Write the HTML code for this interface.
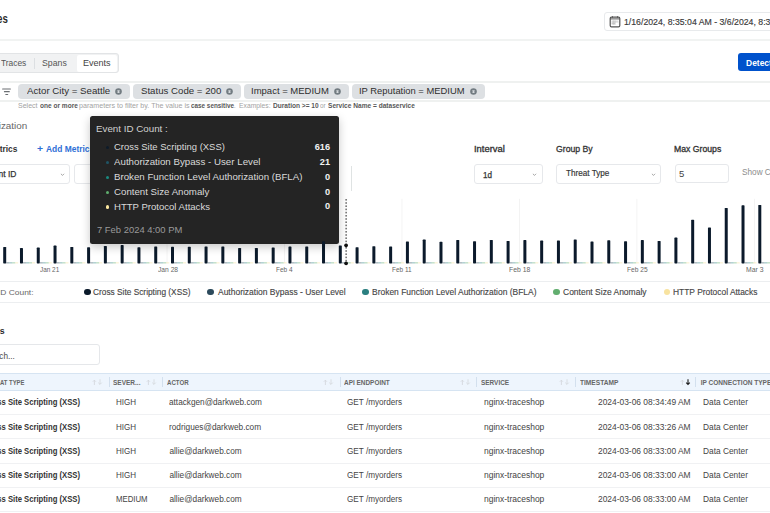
<!DOCTYPE html><html><head><meta charset="utf-8"><style>
html,body{margin:0;padding:0;background:#fff;width:770px;height:513px;overflow:hidden;position:relative}
body{font-family:"Liberation Sans",sans-serif}
.t{position:absolute;white-space:nowrap;transform-origin:0 0}
.b{position:absolute;box-sizing:border-box}
</style></head><body>
<div class="t" style="left:-2.95px;top:12.86px;font-size:12.69px;line-height:12.69px;font-weight:700;color:#2b2b2b;transform:scaleX(0.7667);">es</div>
<div class="b" style="left:0;top:39px;width:770px;height:2px;background:#f1f3f2"></div>
<div class="b" style="left:604px;top:12px;width:180px;height:18.8px;border:1px solid #e8eaec;border-radius:3px"></div>
<svg class="b" style="left:609px;top:16px" width="12" height="11.5" viewBox="0 0 12 11.5">
<rect x="1.2" y="1.2" width="9.6" height="9.6" rx="1.3" fill="none" stroke="#555" stroke-width="1.2"/>
<line x1="1.2" y1="2.9" x2="10.8" y2="2.9" stroke="#555" stroke-width="1"/>
<line x1="3.5" y1="0.2" x2="3.5" y2="1.8" stroke="#555" stroke-width="0.9"/><line x1="8.5" y1="0.2" x2="8.5" y2="1.8" stroke="#555" stroke-width="0.9"/>
<rect x="2.6" y="4.3" width="6.8" height="4.6" fill="#e9e9e9"/>
<path d="M2.6 6H9.4M2.6 7.5H6.5M4.3 4.3V8.9M6 4.3V8.9" stroke="#b5b5b5" stroke-width="0.55"/>
<rect x="6.6" y="6.6" width="2.8" height="2.3" fill="#fff"/>
</svg>
<div class="t" style="left:624.41px;top:16.60px;font-size:9.45px;line-height:9.45px;font-weight:400;color:#3a3a3a;transform:scaleX(0.9241);-webkit-text-stroke:0.15px #3a3a3a;">1/16/2024, 8:35:04 AM - 3/6/2024, 8:35:04 AM</div>
<div class="b" style="left:-6px;top:53px;width:124.7px;height:20px;background:#f1f2f3;border:1px solid #e2e4e6;border-radius:3px"></div>
<div class="b" style="left:76.9px;top:54.5px;width:40.5px;height:17px;background:#fff;border-radius:2px"></div>
<div class="b" style="left:34.2px;top:57.7px;width:0.8px;height:11px;background:#dcdfe2"></div>
<div class="t" style="left:0.57px;top:59.27px;font-size:9.01px;line-height:9.01px;font-weight:400;color:#555;transform:scaleX(0.9308);">Traces</div>
<div class="t" style="left:42.22px;top:59.27px;font-size:9.01px;line-height:9.01px;font-weight:400;color:#555;transform:scaleX(0.9697);">Spans</div>
<div class="t" style="left:83.25px;top:59.27px;font-size:9.01px;line-height:9.01px;font-weight:400;color:#444;transform:scaleX(1.0038);">Events</div>
<div class="b" style="left:737.8px;top:53px;width:60px;height:17.6px;background:#0052cc;border-radius:3px"></div>
<div class="t" style="left:746.10px;top:59.16px;font-size:8.43px;line-height:8.43px;font-weight:700;color:#fff;transform:scaleX(1.0000);">Detect</div>
<div class="b" style="left:0;top:81px;width:770px;height:1.7px;background:#eff1f0"></div>
<div class="b" style="left:0;top:100.2px;width:770px;height:1.7px;background:#eff1f0"></div>
<svg class="b" style="left:2px;top:88px" width="10" height="8" viewBox="0 0 10 8">
<line x1="0.6" y1="1" x2="8.4" y2="1" stroke="#6a6e72" stroke-width="1.1" stroke-linecap="round"/>
<line x1="2.4" y1="3.65" x2="7.3" y2="3.65" stroke="#6a6e72" stroke-width="1.1" stroke-linecap="round"/>
<line x1="3.8" y1="6.5" x2="5.7" y2="6.5" stroke="#6a6e72" stroke-width="1.1" stroke-linecap="round"/></svg>
<div class="b" style="left:18px;top:84px;width:111.6px;height:15.2px;background:#dde0e3;border-radius:4px"></div>
<div class="t" style="left:26.50px;top:85.88px;font-size:9.59px;line-height:9.59px;font-weight:400;color:#2e2e2e;transform:scaleX(1.0122);">Actor City = Seattle</div>
<svg class="b" style="left:115.1px;top:88.4px" width="7" height="7" viewBox="0 0 7 7"><circle cx="3.5" cy="3.5" r="3.3" fill="#737c82"/><path d="M2.5 2.5L4.5 4.5M4.5 2.5L2.5 4.5" stroke="#d5d9dc" stroke-width="1.1"/></svg>
<div class="b" style="left:132.9px;top:84px;width:108.3px;height:15.2px;background:#dde0e3;border-radius:4px"></div>
<div class="t" style="left:140.50px;top:85.88px;font-size:9.59px;line-height:9.59px;font-weight:400;color:#2e2e2e;transform:scaleX(1.0083);">Status Code = 200</div>
<svg class="b" style="left:226.1px;top:88.4px" width="7" height="7" viewBox="0 0 7 7"><circle cx="3.5" cy="3.5" r="3.3" fill="#737c82"/><path d="M2.5 2.5L4.5 4.5M4.5 2.5L2.5 4.5" stroke="#d5d9dc" stroke-width="1.1"/></svg>
<div class="b" style="left:244.2px;top:84px;width:104.4px;height:15.2px;background:#dde0e3;border-radius:4px"></div>
<div class="t" style="left:251.06px;top:85.88px;font-size:9.59px;line-height:9.59px;font-weight:400;color:#2e2e2e;transform:scaleX(0.9922);">Impact = MEDIUM</div>
<svg class="b" style="left:333.7px;top:88.4px" width="7" height="7" viewBox="0 0 7 7"><circle cx="3.5" cy="3.5" r="3.3" fill="#737c82"/><path d="M2.5 2.5L4.5 4.5M4.5 2.5L2.5 4.5" stroke="#d5d9dc" stroke-width="1.1"/></svg>
<div class="b" style="left:351.5px;top:84px;width:133.2px;height:15.2px;background:#dde0e3;border-radius:4px"></div>
<div class="t" style="left:358.96px;top:85.88px;font-size:9.59px;line-height:9.59px;font-weight:400;color:#2e2e2e;transform:scaleX(0.9807);">IP Reputation = MEDIUM</div>
<svg class="b" style="left:470.0px;top:88.4px" width="7" height="7" viewBox="0 0 7 7"><circle cx="3.5" cy="3.5" r="3.3" fill="#737c82"/><path d="M2.5 2.5L4.5 4.5M4.5 2.5L2.5 4.5" stroke="#d5d9dc" stroke-width="1.1"/></svg>
<div class="t" style="left:18.39px;top:103.42px;font-size:6.83px;line-height:6.83px;font-weight:400;color:#a3a3a3;transform:scaleX(1.0270);">Select</div>
<div class="t" style="left:39.66px;top:103.42px;font-size:6.83px;line-height:6.83px;font-weight:700;color:#585858;transform:scaleX(0.9590);">one or more</div>
<div class="t" style="left:79.18px;top:103.42px;font-size:6.83px;line-height:6.83px;font-weight:400;color:#a3a3a3;transform:scaleX(1.0432);">parameters to filter by. The value is</div>
<div class="t" style="left:190.97px;top:103.42px;font-size:6.83px;line-height:6.83px;font-weight:700;color:#585858;transform:scaleX(0.9290);">case sensitive</div>
<div class="t" style="left:233.70px;top:103.42px;font-size:6.83px;line-height:6.83px;font-weight:400;color:#a3a3a3;transform:scaleX(1.0000);">.</div>
<div class="t" style="left:239.31px;top:103.42px;font-size:6.83px;line-height:6.83px;font-weight:400;color:#a3a3a3;transform:scaleX(0.9886);">Examples:</div>
<div class="t" style="left:272.52px;top:103.42px;font-size:6.83px;line-height:6.83px;font-weight:700;color:#585858;transform:scaleX(0.9626);">Duration &gt;= 10</div>
<div class="t" style="left:319.77px;top:103.42px;font-size:6.83px;line-height:6.83px;font-weight:400;color:#a3a3a3;transform:scaleX(0.9217);">or</div>
<div class="t" style="left:328.16px;top:103.42px;font-size:6.83px;line-height:6.83px;font-weight:700;color:#585858;transform:scaleX(0.9638);">Service Name = dataservice</div>
<div class="t" style="left:-28.32px;top:122.16px;font-size:8.90px;line-height:8.90px;font-weight:400;color:#666;transform:scaleX(1.1130);">Visualization</div>
<div class="t" style="left:-11.87px;top:145.81px;font-size:8.14px;line-height:8.14px;font-weight:700;color:#333;transform:scaleX(1.0327);">Metrics</div>
<div class="t" style="left:36.61px;top:145.22px;font-size:8.83px;line-height:8.83px;font-weight:700;color:#2f6fd6;transform:scaleX(1.1778);">+</div>
<div class="t" style="left:45.74px;top:145.81px;font-size:8.14px;line-height:8.14px;font-weight:700;color:#2f6fd6;transform:scaleX(1.0361);">Add Metric</div>
<div class="b" style="left:-10px;top:164.3px;width:80px;height:19.4px;border:1px solid #e6e8eb;border-radius:3px"></div>
<div class="t" style="left:-16.27px;top:170.44px;font-size:8.58px;line-height:8.58px;font-weight:400;color:#333;transform:scaleX(0.9867);-webkit-text-stroke:0.25px #333;">Event ID</div>
<svg class="b" style="left:60px;top:172.5px" width="5" height="3.5" viewBox="0 0 5 3.5"><path d="M0.9 0.8L2.5 2.4L4.1 0.8" fill="none" stroke="#8a8a8a" stroke-width="0.75"/></svg>
<div class="b" style="left:74.3px;top:164.3px;width:100px;height:19.4px;border:1px solid #e6e8eb;border-radius:3px"></div>
<div class="b" style="left:351px;top:165.6px;width:1px;height:25px;background:#dfe3e3"></div>
<div class="t" style="left:474.23px;top:145.51px;font-size:8.14px;line-height:8.14px;font-weight:400;color:#333;transform:scaleX(1.1569);-webkit-text-stroke:0.3px #333;">Interval</div>
<div class="b" style="left:474.4px;top:164.2px;width:68.3px;height:19.8px;border:1px solid #e6e8eb;border-radius:3px"></div>
<div class="t" style="left:483.42px;top:170.62px;font-size:8.37px;line-height:8.37px;font-weight:400;color:#333;transform:scaleX(0.9697);-webkit-text-stroke:0.25px #333;">1d</div>
<svg class="b" style="left:532.3px;top:172.6px" width="5" height="3.5" viewBox="0 0 5 3.5"><path d="M0.9 0.8L2.5 2.4L4.1 0.8" fill="none" stroke="#8a8a8a" stroke-width="0.75"/></svg>
<div class="t" style="left:555.72px;top:145.27px;font-size:9.01px;line-height:9.01px;font-weight:400;color:#333;transform:scaleX(0.9653);-webkit-text-stroke:0.3px #333;">Group By</div>
<div class="b" style="left:556.2px;top:164.3px;width:104.8px;height:19.4px;border:1px solid #e6e8eb;border-radius:3px"></div>
<div class="t" style="left:565.65px;top:170.31px;font-size:8.14px;line-height:8.14px;font-weight:400;color:#333;transform:scaleX(1.0035);-webkit-text-stroke:0.15px #333;">Threat Type</div>
<svg class="b" style="left:650.7px;top:172.6px" width="5" height="3.5" viewBox="0 0 5 3.5"><path d="M0.9 0.8L2.5 2.4L4.1 0.8" fill="none" stroke="#8a8a8a" stroke-width="0.75"/></svg>
<div class="t" style="left:674.21px;top:145.79px;font-size:8.28px;line-height:8.28px;font-weight:400;color:#333;transform:scaleX(1.0500);-webkit-text-stroke:0.3px #333;">Max Groups</div>
<div class="b" style="left:674.8px;top:164px;width:54.6px;height:19px;border:1px solid #e6e8eb;border-radius:3px"></div>
<div class="t" style="left:679.36px;top:170.19px;font-size:8.87px;line-height:8.87px;font-weight:400;color:#444;transform:scaleX(1.0750);">5</div>
<div class="t" style="left:742.49px;top:168.91px;font-size:8.14px;line-height:8.14px;font-weight:400;color:#8c8c8c;transform:scaleX(1.0127);">Show Columns</div>
<svg class="b" style="left:0;top:0" width="770" height="300" viewBox="0 0 770 300"><rect x="166.66" y="198.8" width="0.8" height="64.5" fill="#f1f1f1"/><rect x="284.12" y="198.8" width="0.8" height="64.5" fill="#f1f1f1"/><rect x="401.58" y="198.8" width="0.8" height="64.5" fill="#f1f1f1"/><rect x="519.04" y="198.8" width="0.8" height="64.5" fill="#f1f1f1"/><rect x="636.50" y="198.8" width="0.8" height="64.5" fill="#f1f1f1"/><rect x="753.96" y="198.8" width="0.8" height="64.5" fill="#f1f1f1"/><rect x="3.20" y="247" width="3" height="16.4" rx="0.6" fill="#0b1a2b"/><rect x="6.20" y="262.3" width="3" height="1.1" fill="#2c4a5c" opacity="0.5"/><rect x="9.20" y="262.3" width="3" height="1.1" fill="#2b7f80" opacity="0.5"/><rect x="12.20" y="262.3" width="3" height="1.1" fill="#62ae6f" opacity="0.5"/><rect x="15.20" y="262.3" width="3" height="1.1" fill="#f8e3a0" opacity="0.5"/><rect x="19.98" y="248" width="3" height="15.4" rx="0.6" fill="#0b1a2b"/><rect x="22.98" y="262.3" width="3" height="1.1" fill="#2c4a5c" opacity="0.5"/><rect x="25.98" y="262.3" width="3" height="1.1" fill="#2b7f80" opacity="0.5"/><rect x="28.98" y="262.3" width="3" height="1.1" fill="#62ae6f" opacity="0.5"/><rect x="31.98" y="262.3" width="3" height="1.1" fill="#f8e3a0" opacity="0.5"/><rect x="36.76" y="247.6" width="3" height="15.8" rx="0.6" fill="#0b1a2b"/><rect x="39.76" y="262.3" width="3" height="1.1" fill="#2c4a5c" opacity="0.5"/><rect x="42.76" y="262.3" width="3" height="1.1" fill="#2b7f80" opacity="0.5"/><rect x="45.76" y="262.3" width="3" height="1.1" fill="#62ae6f" opacity="0.5"/><rect x="48.76" y="262.3" width="3" height="1.1" fill="#f8e3a0" opacity="0.5"/><rect x="53.54" y="245.6" width="3" height="17.8" rx="0.6" fill="#0b1a2b"/><rect x="56.54" y="262.3" width="3" height="1.1" fill="#2c4a5c" opacity="0.5"/><rect x="59.54" y="262.3" width="3" height="1.1" fill="#2b7f80" opacity="0.5"/><rect x="62.54" y="262.3" width="3" height="1.1" fill="#62ae6f" opacity="0.5"/><rect x="65.54" y="262.3" width="3" height="1.1" fill="#f8e3a0" opacity="0.5"/><rect x="70.32" y="247" width="3" height="16.4" rx="0.6" fill="#0b1a2b"/><rect x="73.32" y="262.3" width="3" height="1.1" fill="#2c4a5c" opacity="0.5"/><rect x="76.32" y="262.3" width="3" height="1.1" fill="#2b7f80" opacity="0.5"/><rect x="79.32" y="262.3" width="3" height="1.1" fill="#62ae6f" opacity="0.5"/><rect x="82.32" y="262.3" width="3" height="1.1" fill="#f8e3a0" opacity="0.5"/><rect x="87.10" y="247.3" width="3" height="16.1" rx="0.6" fill="#0b1a2b"/><rect x="90.10" y="262.3" width="3" height="1.1" fill="#2c4a5c" opacity="0.5"/><rect x="93.10" y="262.3" width="3" height="1.1" fill="#2b7f80" opacity="0.5"/><rect x="96.10" y="262.3" width="3" height="1.1" fill="#62ae6f" opacity="0.5"/><rect x="99.10" y="262.3" width="3" height="1.1" fill="#f8e3a0" opacity="0.5"/><rect x="103.88" y="246" width="3" height="17.4" rx="0.6" fill="#0b1a2b"/><rect x="106.88" y="262.3" width="3" height="1.1" fill="#2c4a5c" opacity="0.5"/><rect x="109.88" y="262.3" width="3" height="1.1" fill="#2b7f80" opacity="0.5"/><rect x="112.88" y="262.3" width="3" height="1.1" fill="#62ae6f" opacity="0.5"/><rect x="115.88" y="262.3" width="3" height="1.1" fill="#f8e3a0" opacity="0.5"/><rect x="120.66" y="245.1" width="3" height="18.3" rx="0.6" fill="#0b1a2b"/><rect x="123.66" y="262.3" width="3" height="1.1" fill="#2c4a5c" opacity="0.5"/><rect x="126.66" y="262.3" width="3" height="1.1" fill="#2b7f80" opacity="0.5"/><rect x="129.66" y="262.3" width="3" height="1.1" fill="#62ae6f" opacity="0.5"/><rect x="132.66" y="262.3" width="3" height="1.1" fill="#f8e3a0" opacity="0.5"/><rect x="137.44" y="247.3" width="3" height="16.1" rx="0.6" fill="#0b1a2b"/><rect x="140.44" y="262.3" width="3" height="1.1" fill="#2c4a5c" opacity="0.5"/><rect x="143.44" y="262.3" width="3" height="1.1" fill="#2b7f80" opacity="0.5"/><rect x="146.44" y="262.3" width="3" height="1.1" fill="#62ae6f" opacity="0.5"/><rect x="149.44" y="262.3" width="3" height="1.1" fill="#f8e3a0" opacity="0.5"/><rect x="154.22" y="246.4" width="3" height="17.0" rx="0.6" fill="#0b1a2b"/><rect x="157.22" y="262.3" width="3" height="1.1" fill="#2c4a5c" opacity="0.5"/><rect x="160.22" y="262.3" width="3" height="1.1" fill="#2b7f80" opacity="0.5"/><rect x="163.22" y="262.3" width="3" height="1.1" fill="#62ae6f" opacity="0.5"/><rect x="166.22" y="262.3" width="3" height="1.1" fill="#f8e3a0" opacity="0.5"/><rect x="171.00" y="246.7" width="3" height="16.7" rx="0.6" fill="#0b1a2b"/><rect x="174.00" y="262.3" width="3" height="1.1" fill="#2c4a5c" opacity="0.5"/><rect x="177.00" y="262.3" width="3" height="1.1" fill="#2b7f80" opacity="0.5"/><rect x="180.00" y="262.3" width="3" height="1.1" fill="#62ae6f" opacity="0.5"/><rect x="183.00" y="262.3" width="3" height="1.1" fill="#f8e3a0" opacity="0.5"/><rect x="187.78" y="246.8" width="3" height="16.6" rx="0.6" fill="#0b1a2b"/><rect x="190.78" y="262.3" width="3" height="1.1" fill="#2c4a5c" opacity="0.5"/><rect x="193.78" y="262.3" width="3" height="1.1" fill="#2b7f80" opacity="0.5"/><rect x="196.78" y="262.3" width="3" height="1.1" fill="#62ae6f" opacity="0.5"/><rect x="199.78" y="262.3" width="3" height="1.1" fill="#f8e3a0" opacity="0.5"/><rect x="204.56" y="246.5" width="3" height="16.9" rx="0.6" fill="#0b1a2b"/><rect x="207.56" y="262.3" width="3" height="1.1" fill="#2c4a5c" opacity="0.5"/><rect x="210.56" y="262.3" width="3" height="1.1" fill="#2b7f80" opacity="0.5"/><rect x="213.56" y="262.3" width="3" height="1.1" fill="#62ae6f" opacity="0.5"/><rect x="216.56" y="262.3" width="3" height="1.1" fill="#f8e3a0" opacity="0.5"/><rect x="221.34" y="246.5" width="3" height="16.9" rx="0.6" fill="#0b1a2b"/><rect x="224.34" y="262.3" width="3" height="1.1" fill="#2c4a5c" opacity="0.5"/><rect x="227.34" y="262.3" width="3" height="1.1" fill="#2b7f80" opacity="0.5"/><rect x="230.34" y="262.3" width="3" height="1.1" fill="#62ae6f" opacity="0.5"/><rect x="233.34" y="262.3" width="3" height="1.1" fill="#f8e3a0" opacity="0.5"/><rect x="238.12" y="247.9" width="3" height="15.5" rx="0.6" fill="#0b1a2b"/><rect x="241.12" y="262.3" width="3" height="1.1" fill="#2c4a5c" opacity="0.5"/><rect x="244.12" y="262.3" width="3" height="1.1" fill="#2b7f80" opacity="0.5"/><rect x="247.12" y="262.3" width="3" height="1.1" fill="#62ae6f" opacity="0.5"/><rect x="250.12" y="262.3" width="3" height="1.1" fill="#f8e3a0" opacity="0.5"/><rect x="254.90" y="248" width="3" height="15.4" rx="0.6" fill="#0b1a2b"/><rect x="257.90" y="262.3" width="3" height="1.1" fill="#2c4a5c" opacity="0.5"/><rect x="260.90" y="262.3" width="3" height="1.1" fill="#2b7f80" opacity="0.5"/><rect x="263.90" y="262.3" width="3" height="1.1" fill="#62ae6f" opacity="0.5"/><rect x="266.90" y="262.3" width="3" height="1.1" fill="#f8e3a0" opacity="0.5"/><rect x="271.68" y="247.4" width="3" height="16.0" rx="0.6" fill="#0b1a2b"/><rect x="274.68" y="262.3" width="3" height="1.1" fill="#2c4a5c" opacity="0.5"/><rect x="277.68" y="262.3" width="3" height="1.1" fill="#2b7f80" opacity="0.5"/><rect x="280.68" y="262.3" width="3" height="1.1" fill="#62ae6f" opacity="0.5"/><rect x="283.68" y="262.3" width="3" height="1.1" fill="#f8e3a0" opacity="0.5"/><rect x="288.46" y="246.5" width="3" height="16.9" rx="0.6" fill="#0b1a2b"/><rect x="291.46" y="262.3" width="3" height="1.1" fill="#2c4a5c" opacity="0.5"/><rect x="294.46" y="262.3" width="3" height="1.1" fill="#2b7f80" opacity="0.5"/><rect x="297.46" y="262.3" width="3" height="1.1" fill="#62ae6f" opacity="0.5"/><rect x="300.46" y="262.3" width="3" height="1.1" fill="#f8e3a0" opacity="0.5"/><rect x="305.24" y="246.5" width="3" height="16.9" rx="0.6" fill="#0b1a2b"/><rect x="308.24" y="262.3" width="3" height="1.1" fill="#2c4a5c" opacity="0.5"/><rect x="311.24" y="262.3" width="3" height="1.1" fill="#2b7f80" opacity="0.5"/><rect x="314.24" y="262.3" width="3" height="1.1" fill="#62ae6f" opacity="0.5"/><rect x="317.24" y="262.3" width="3" height="1.1" fill="#f8e3a0" opacity="0.5"/><rect x="322.02" y="241.8" width="3" height="21.6" rx="0.6" fill="#0b1a2b"/><rect x="325.02" y="262.3" width="3" height="1.1" fill="#2c4a5c" opacity="0.5"/><rect x="328.02" y="262.3" width="3" height="1.1" fill="#2b7f80" opacity="0.5"/><rect x="331.02" y="262.3" width="3" height="1.1" fill="#62ae6f" opacity="0.5"/><rect x="334.02" y="262.3" width="3" height="1.1" fill="#f8e3a0" opacity="0.5"/><rect x="338.80" y="245.4" width="3" height="18.0" rx="0.6" fill="#0b1a2b"/><rect x="341.80" y="262.3" width="3" height="1.1" fill="#2c4a5c" opacity="0.5"/><rect x="344.80" y="262.3" width="3" height="1.1" fill="#2b7f80" opacity="0.5"/><rect x="347.80" y="262.3" width="3" height="1.1" fill="#62ae6f" opacity="0.5"/><rect x="350.80" y="262.3" width="3" height="1.1" fill="#f8e3a0" opacity="0.5"/><rect x="355.58" y="247.2" width="3" height="16.2" rx="0.6" fill="#0b1a2b"/><rect x="358.58" y="262.3" width="3" height="1.1" fill="#2c4a5c" opacity="0.5"/><rect x="361.58" y="262.3" width="3" height="1.1" fill="#2b7f80" opacity="0.5"/><rect x="364.58" y="262.3" width="3" height="1.1" fill="#62ae6f" opacity="0.5"/><rect x="367.58" y="262.3" width="3" height="1.1" fill="#f8e3a0" opacity="0.5"/><rect x="372.36" y="246.2" width="3" height="17.2" rx="0.6" fill="#0b1a2b"/><rect x="375.36" y="262.3" width="3" height="1.1" fill="#2c4a5c" opacity="0.5"/><rect x="378.36" y="262.3" width="3" height="1.1" fill="#2b7f80" opacity="0.5"/><rect x="381.36" y="262.3" width="3" height="1.1" fill="#62ae6f" opacity="0.5"/><rect x="384.36" y="262.3" width="3" height="1.1" fill="#f8e3a0" opacity="0.5"/><rect x="389.14" y="246.5" width="3" height="16.9" rx="0.6" fill="#0b1a2b"/><rect x="392.14" y="262.3" width="3" height="1.1" fill="#2c4a5c" opacity="0.5"/><rect x="395.14" y="262.3" width="3" height="1.1" fill="#2b7f80" opacity="0.5"/><rect x="398.14" y="262.3" width="3" height="1.1" fill="#62ae6f" opacity="0.5"/><rect x="401.14" y="262.3" width="3" height="1.1" fill="#f8e3a0" opacity="0.5"/><rect x="405.92" y="241.5" width="3" height="21.9" rx="0.6" fill="#0b1a2b"/><rect x="408.92" y="262.3" width="3" height="1.1" fill="#2c4a5c" opacity="0.5"/><rect x="411.92" y="262.3" width="3" height="1.1" fill="#2b7f80" opacity="0.5"/><rect x="414.92" y="262.3" width="3" height="1.1" fill="#62ae6f" opacity="0.5"/><rect x="417.92" y="262.3" width="3" height="1.1" fill="#f8e3a0" opacity="0.5"/><rect x="422.70" y="239.6" width="3" height="23.8" rx="0.6" fill="#0b1a2b"/><rect x="425.70" y="262.3" width="3" height="1.1" fill="#2c4a5c" opacity="0.5"/><rect x="428.70" y="262.3" width="3" height="1.1" fill="#2b7f80" opacity="0.5"/><rect x="431.70" y="262.3" width="3" height="1.1" fill="#62ae6f" opacity="0.5"/><rect x="434.70" y="262.3" width="3" height="1.1" fill="#f8e3a0" opacity="0.5"/><rect x="439.48" y="241.8" width="3" height="21.6" rx="0.6" fill="#0b1a2b"/><rect x="442.48" y="262.3" width="3" height="1.1" fill="#2c4a5c" opacity="0.5"/><rect x="445.48" y="262.3" width="3" height="1.1" fill="#2b7f80" opacity="0.5"/><rect x="448.48" y="262.3" width="3" height="1.1" fill="#62ae6f" opacity="0.5"/><rect x="451.48" y="262.3" width="3" height="1.1" fill="#f8e3a0" opacity="0.5"/><rect x="456.26" y="240" width="3" height="23.4" rx="0.6" fill="#0b1a2b"/><rect x="459.26" y="262.3" width="3" height="1.1" fill="#2c4a5c" opacity="0.5"/><rect x="462.26" y="262.3" width="3" height="1.1" fill="#2b7f80" opacity="0.5"/><rect x="465.26" y="262.3" width="3" height="1.1" fill="#62ae6f" opacity="0.5"/><rect x="468.26" y="262.3" width="3" height="1.1" fill="#f8e3a0" opacity="0.5"/><rect x="473.04" y="241.2" width="3" height="22.2" rx="0.6" fill="#0b1a2b"/><rect x="476.04" y="262.3" width="3" height="1.1" fill="#2c4a5c" opacity="0.5"/><rect x="479.04" y="262.3" width="3" height="1.1" fill="#2b7f80" opacity="0.5"/><rect x="482.04" y="262.3" width="3" height="1.1" fill="#62ae6f" opacity="0.5"/><rect x="485.04" y="262.3" width="3" height="1.1" fill="#f8e3a0" opacity="0.5"/><rect x="489.82" y="239.9" width="3" height="23.5" rx="0.6" fill="#0b1a2b"/><rect x="492.82" y="262.3" width="3" height="1.1" fill="#2c4a5c" opacity="0.5"/><rect x="495.82" y="262.3" width="3" height="1.1" fill="#2b7f80" opacity="0.5"/><rect x="498.82" y="262.3" width="3" height="1.1" fill="#62ae6f" opacity="0.5"/><rect x="501.82" y="262.3" width="3" height="1.1" fill="#f8e3a0" opacity="0.5"/><rect x="506.60" y="241" width="3" height="22.4" rx="0.6" fill="#0b1a2b"/><rect x="509.60" y="262.3" width="3" height="1.1" fill="#2c4a5c" opacity="0.5"/><rect x="512.60" y="262.3" width="3" height="1.1" fill="#2b7f80" opacity="0.5"/><rect x="515.60" y="262.3" width="3" height="1.1" fill="#62ae6f" opacity="0.5"/><rect x="518.60" y="262.3" width="3" height="1.1" fill="#f8e3a0" opacity="0.5"/><rect x="523.38" y="240.1" width="3" height="23.3" rx="0.6" fill="#0b1a2b"/><rect x="526.38" y="262.3" width="3" height="1.1" fill="#2c4a5c" opacity="0.5"/><rect x="529.38" y="262.3" width="3" height="1.1" fill="#2b7f80" opacity="0.5"/><rect x="532.38" y="262.3" width="3" height="1.1" fill="#62ae6f" opacity="0.5"/><rect x="535.38" y="262.3" width="3" height="1.1" fill="#f8e3a0" opacity="0.5"/><rect x="540.16" y="240.6" width="3" height="22.8" rx="0.6" fill="#0b1a2b"/><rect x="543.16" y="262.3" width="3" height="1.1" fill="#2c4a5c" opacity="0.5"/><rect x="546.16" y="262.3" width="3" height="1.1" fill="#2b7f80" opacity="0.5"/><rect x="549.16" y="262.3" width="3" height="1.1" fill="#62ae6f" opacity="0.5"/><rect x="552.16" y="262.3" width="3" height="1.1" fill="#f8e3a0" opacity="0.5"/><rect x="556.94" y="240.5" width="3" height="22.9" rx="0.6" fill="#0b1a2b"/><rect x="559.94" y="262.3" width="3" height="1.1" fill="#2c4a5c" opacity="0.5"/><rect x="562.94" y="262.3" width="3" height="1.1" fill="#2b7f80" opacity="0.5"/><rect x="565.94" y="262.3" width="3" height="1.1" fill="#62ae6f" opacity="0.5"/><rect x="568.94" y="262.3" width="3" height="1.1" fill="#f8e3a0" opacity="0.5"/><rect x="573.72" y="239.4" width="3" height="24.0" rx="0.6" fill="#0b1a2b"/><rect x="576.72" y="262.3" width="3" height="1.1" fill="#2c4a5c" opacity="0.5"/><rect x="579.72" y="262.3" width="3" height="1.1" fill="#2b7f80" opacity="0.5"/><rect x="582.72" y="262.3" width="3" height="1.1" fill="#62ae6f" opacity="0.5"/><rect x="585.72" y="262.3" width="3" height="1.1" fill="#f8e3a0" opacity="0.5"/><rect x="590.50" y="241.5" width="3" height="21.9" rx="0.6" fill="#0b1a2b"/><rect x="593.50" y="262.3" width="3" height="1.1" fill="#2c4a5c" opacity="0.5"/><rect x="596.50" y="262.3" width="3" height="1.1" fill="#2b7f80" opacity="0.5"/><rect x="599.50" y="262.3" width="3" height="1.1" fill="#62ae6f" opacity="0.5"/><rect x="602.50" y="262.3" width="3" height="1.1" fill="#f8e3a0" opacity="0.5"/><rect x="607.28" y="240.3" width="3" height="23.1" rx="0.6" fill="#0b1a2b"/><rect x="610.28" y="262.3" width="3" height="1.1" fill="#2c4a5c" opacity="0.5"/><rect x="613.28" y="262.3" width="3" height="1.1" fill="#2b7f80" opacity="0.5"/><rect x="616.28" y="262.3" width="3" height="1.1" fill="#62ae6f" opacity="0.5"/><rect x="619.28" y="262.3" width="3" height="1.1" fill="#f8e3a0" opacity="0.5"/><rect x="624.06" y="241.3" width="3" height="22.1" rx="0.6" fill="#0b1a2b"/><rect x="627.06" y="262.3" width="3" height="1.1" fill="#2c4a5c" opacity="0.5"/><rect x="630.06" y="262.3" width="3" height="1.1" fill="#2b7f80" opacity="0.5"/><rect x="633.06" y="262.3" width="3" height="1.1" fill="#62ae6f" opacity="0.5"/><rect x="636.06" y="262.3" width="3" height="1.1" fill="#f8e3a0" opacity="0.5"/><rect x="640.84" y="240.1" width="3" height="23.3" rx="0.6" fill="#0b1a2b"/><rect x="643.84" y="262.3" width="3" height="1.1" fill="#2c4a5c" opacity="0.5"/><rect x="646.84" y="262.3" width="3" height="1.1" fill="#2b7f80" opacity="0.5"/><rect x="649.84" y="262.3" width="3" height="1.1" fill="#62ae6f" opacity="0.5"/><rect x="652.84" y="262.3" width="3" height="1.1" fill="#f8e3a0" opacity="0.5"/><rect x="657.62" y="240.9" width="3" height="22.5" rx="0.6" fill="#0b1a2b"/><rect x="660.62" y="262.3" width="3" height="1.1" fill="#2c4a5c" opacity="0.5"/><rect x="663.62" y="262.3" width="3" height="1.1" fill="#2b7f80" opacity="0.5"/><rect x="666.62" y="262.3" width="3" height="1.1" fill="#62ae6f" opacity="0.5"/><rect x="669.62" y="262.3" width="3" height="1.1" fill="#f8e3a0" opacity="0.5"/><rect x="674.40" y="237.6" width="3" height="25.8" rx="0.6" fill="#0b1a2b"/><rect x="677.40" y="262.3" width="3" height="1.1" fill="#2c4a5c" opacity="0.5"/><rect x="680.40" y="262.3" width="3" height="1.1" fill="#2b7f80" opacity="0.5"/><rect x="683.40" y="262.3" width="3" height="1.1" fill="#62ae6f" opacity="0.5"/><rect x="686.40" y="262.3" width="3" height="1.1" fill="#f8e3a0" opacity="0.5"/><rect x="691.18" y="219.8" width="3" height="43.6" rx="0.6" fill="#0b1a2b"/><rect x="694.18" y="262.3" width="3" height="1.1" fill="#2c4a5c" opacity="0.5"/><rect x="697.18" y="262.3" width="3" height="1.1" fill="#2b7f80" opacity="0.5"/><rect x="700.18" y="262.3" width="3" height="1.1" fill="#62ae6f" opacity="0.5"/><rect x="703.18" y="262.3" width="3" height="1.1" fill="#f8e3a0" opacity="0.5"/><rect x="707.96" y="227.4" width="3" height="36.0" rx="0.6" fill="#0b1a2b"/><rect x="710.96" y="262.3" width="3" height="1.1" fill="#2c4a5c" opacity="0.5"/><rect x="713.96" y="262.3" width="3" height="1.1" fill="#2b7f80" opacity="0.5"/><rect x="716.96" y="262.3" width="3" height="1.1" fill="#62ae6f" opacity="0.5"/><rect x="719.96" y="262.3" width="3" height="1.1" fill="#f8e3a0" opacity="0.5"/><rect x="724.74" y="207.9" width="3" height="55.5" rx="0.6" fill="#0b1a2b"/><rect x="727.74" y="262.3" width="3" height="1.1" fill="#2c4a5c" opacity="0.5"/><rect x="730.74" y="262.3" width="3" height="1.1" fill="#2b7f80" opacity="0.5"/><rect x="733.74" y="262.3" width="3" height="1.1" fill="#62ae6f" opacity="0.5"/><rect x="736.74" y="262.3" width="3" height="1.1" fill="#f8e3a0" opacity="0.5"/><rect x="741.52" y="205.3" width="3" height="58.1" rx="0.6" fill="#0b1a2b"/><rect x="744.52" y="262.3" width="3" height="1.1" fill="#2c4a5c" opacity="0.5"/><rect x="747.52" y="262.3" width="3" height="1.1" fill="#2b7f80" opacity="0.5"/><rect x="750.52" y="262.3" width="3" height="1.1" fill="#62ae6f" opacity="0.5"/><rect x="753.52" y="262.3" width="3" height="1.1" fill="#f8e3a0" opacity="0.5"/><rect x="758.30" y="204.9" width="3" height="58.5" rx="0.6" fill="#0b1a2b"/><rect x="761.30" y="262.3" width="3" height="1.1" fill="#2c4a5c" opacity="0.5"/><rect x="764.30" y="262.3" width="3" height="1.1" fill="#2b7f80" opacity="0.5"/><rect x="767.30" y="262.3" width="3" height="1.1" fill="#62ae6f" opacity="0.5"/><rect x="770.30" y="262.3" width="3" height="1.1" fill="#f8e3a0" opacity="0.5"/><line x1="346.1" y1="199" x2="346.1" y2="263.3" stroke="#222" stroke-width="1" stroke-dasharray="1.6 1.6"/><circle cx="346.1" cy="245.3" r="1.9" fill="#111"/><circle cx="346.1" cy="263.3" r="1.9" fill="#111"/></svg>
<div class="t" style="left:40.09px;top:266.40px;font-size:7.56px;line-height:7.56px;font-weight:400;color:#666;transform:scaleX(0.8500);">Jan 21</div>
<div class="t" style="left:157.98px;top:266.40px;font-size:7.56px;line-height:7.56px;font-weight:400;color:#666;transform:scaleX(0.8864);">Jan 28</div>
<div class="t" style="left:276.27px;top:266.40px;font-size:7.56px;line-height:7.56px;font-weight:400;color:#666;transform:scaleX(0.8587);">Feb 4</div>
<div class="t" style="left:392.37px;top:266.40px;font-size:7.56px;line-height:7.56px;font-weight:400;color:#666;transform:scaleX(0.8539);">Feb 11</div>
<div class="t" style="left:509.15px;top:266.40px;font-size:7.56px;line-height:7.56px;font-weight:400;color:#666;transform:scaleX(0.9055);">Feb 18</div>
<div class="t" style="left:627.26px;top:266.40px;font-size:7.56px;line-height:7.56px;font-weight:400;color:#666;transform:scaleX(0.8791);">Feb 25</div>
<div class="t" style="left:745.85px;top:266.40px;font-size:7.56px;line-height:7.56px;font-weight:400;color:#666;transform:scaleX(0.9027);">Mar 3</div>
<div class="b" style="left:0;top:281px;width:770px;height:1px;background:#eceef0"></div>
<div class="b" style="left:0;top:302px;width:770px;height:1px;background:#eceef0"></div>
<div class="t" style="left:-25.88px;top:289.33px;font-size:7.99px;line-height:7.99px;font-weight:400;color:#666;transform:scaleX(1.0562);">Event ID Count:</div>
<div class="b" style="left:83.9px;top:288.7px;width:6.7px;height:6.7px;border-radius:50%;background:#0b1a2b"></div>
<div class="t" style="left:93.01px;top:288.26px;font-size:8.43px;line-height:8.43px;font-weight:400;color:#444;transform:scaleX(0.9872);-webkit-text-stroke:0.12px #444;">Cross Site Scripting (XSS)</div>
<div class="b" style="left:207.3px;top:288.7px;width:6.7px;height:6.7px;border-radius:50%;background:#2c4a5c"></div>
<div class="t" style="left:217.90px;top:288.26px;font-size:8.43px;line-height:8.43px;font-weight:400;color:#444;transform:scaleX(1.0067);-webkit-text-stroke:0.12px #444;">Authorization Bypass - User Level</div>
<div class="b" style="left:362.3px;top:288.7px;width:6.7px;height:6.7px;border-radius:50%;background:#2b7f80"></div>
<div class="t" style="left:372.15px;top:288.26px;font-size:8.43px;line-height:8.43px;font-weight:400;color:#444;transform:scaleX(1.0040);-webkit-text-stroke:0.12px #444;">Broken Function Level Authorization (BFLA)</div>
<div class="b" style="left:553.4px;top:288.7px;width:6.7px;height:6.7px;border-radius:50%;background:#62ae6f"></div>
<div class="t" style="left:563.20px;top:288.26px;font-size:8.43px;line-height:8.43px;font-weight:400;color:#444;transform:scaleX(1.0079);-webkit-text-stroke:0.12px #444;">Content Size Anomaly</div>
<div class="b" style="left:663.7px;top:288.7px;width:6.7px;height:6.7px;border-radius:50%;background:#f8e3a0"></div>
<div class="t" style="left:672.95px;top:288.26px;font-size:8.43px;line-height:8.43px;font-weight:400;color:#444;transform:scaleX(0.9988);-webkit-text-stroke:0.12px #444;">HTTP Protocol Attacks</div>
<div class="t" style="left:-23.71px;top:326.66px;font-size:8.90px;line-height:8.90px;font-weight:700;color:#2b2b2b;transform:scaleX(0.9778);">Events</div>
<div class="b" style="left:-10px;top:344.3px;width:110.4px;height:20.3px;border:1px solid #e5e7ea;border-radius:3px"></div>
<div class="t" style="left:-17.93px;top:351.62px;font-size:8.37px;line-height:8.37px;font-weight:400;color:#4a4a4a;transform:scaleX(0.9810);">Search...</div>
<div class="b" style="left:0;top:372.8px;width:770px;height:18px;background:#eef5fd;border-top:1px solid #d6e4f2;border-bottom:1px solid #d6e4f2"></div>
<div class="t" style="left:-15.94px;top:379.86px;font-size:6.54px;line-height:6.54px;font-weight:700;color:#666;transform:scaleX(0.9015);">THREAT TYPE</div>
<div class="t" style="left:113.35px;top:379.86px;font-size:6.54px;line-height:6.54px;font-weight:700;color:#666;transform:scaleX(0.9963);">SEVER...</div>
<div class="t" style="left:166.66px;top:379.86px;font-size:6.54px;line-height:6.54px;font-weight:700;color:#666;transform:scaleX(0.9407);">ACTOR</div>
<div class="t" style="left:344.35px;top:379.86px;font-size:6.54px;line-height:6.54px;font-weight:700;color:#666;transform:scaleX(0.9859);">API ENDPOINT</div>
<div class="t" style="left:480.75px;top:379.86px;font-size:6.54px;line-height:6.54px;font-weight:700;color:#666;transform:scaleX(0.9857);">SERVICE</div>
<div class="t" style="left:580.30px;top:379.86px;font-size:6.54px;line-height:6.54px;font-weight:700;color:#666;transform:scaleX(1.0093);">TIMESTAMP</div>
<div class="t" style="left:700.70px;top:379.86px;font-size:6.54px;line-height:6.54px;font-weight:700;color:#666;transform:scaleX(1.0000);">IP CONNECTION TYPE</div>
<div class="b" style="left:108.7px;top:377.3px;width:0.9px;height:9.4px;background:#d3e0ee"></div>
<div class="b" style="left:162px;top:377.3px;width:0.9px;height:9.4px;background:#d3e0ee"></div>
<div class="b" style="left:339.7px;top:377.3px;width:0.9px;height:9.4px;background:#d3e0ee"></div>
<div class="b" style="left:476.4px;top:377.3px;width:0.9px;height:9.4px;background:#d3e0ee"></div>
<div class="b" style="left:574.5px;top:377.3px;width:0.9px;height:9.4px;background:#d3e0ee"></div>
<div class="b" style="left:695.2px;top:377.3px;width:0.9px;height:9.4px;background:#d3e0ee"></div>
<svg class="b" style="left:92.3px;top:379px" width="11" height="6.5" viewBox="0 0 11 6.5"><path d="M2.4 6V1.2M0.9 2.7L2.4 1.2L3.9 2.7" fill="none" stroke="#d3d7db" stroke-width="0.85"/><path d="M8 0.3V5.3M6.2 3.6L8 5.4L9.8 3.6" fill="none" stroke="#d3d7db" stroke-width="0.8"/></svg>
<svg class="b" style="left:145.8px;top:379px" width="11" height="6.5" viewBox="0 0 11 6.5"><path d="M2.4 6V1.2M0.9 2.7L2.4 1.2L3.9 2.7" fill="none" stroke="#d3d7db" stroke-width="0.85"/><path d="M8 0.3V5.3M6.2 3.6L8 5.4L9.8 3.6" fill="none" stroke="#d3d7db" stroke-width="0.8"/></svg>
<svg class="b" style="left:323.2px;top:379px" width="11" height="6.5" viewBox="0 0 11 6.5"><path d="M2.4 6V1.2M0.9 2.7L2.4 1.2L3.9 2.7" fill="none" stroke="#d3d7db" stroke-width="0.85"/><path d="M8 0.3V5.3M6.2 3.6L8 5.4L9.8 3.6" fill="none" stroke="#d3d7db" stroke-width="0.8"/></svg>
<svg class="b" style="left:459.9px;top:379px" width="11" height="6.5" viewBox="0 0 11 6.5"><path d="M2.4 6V1.2M0.9 2.7L2.4 1.2L3.9 2.7" fill="none" stroke="#d3d7db" stroke-width="0.85"/><path d="M8 0.3V5.3M6.2 3.6L8 5.4L9.8 3.6" fill="none" stroke="#d3d7db" stroke-width="0.8"/></svg>
<svg class="b" style="left:559.1px;top:379px" width="11" height="6.5" viewBox="0 0 11 6.5"><path d="M2.4 6V1.2M0.9 2.7L2.4 1.2L3.9 2.7" fill="none" stroke="#d3d7db" stroke-width="0.85"/><path d="M8 0.3V5.3M6.2 3.6L8 5.4L9.8 3.6" fill="none" stroke="#d3d7db" stroke-width="0.8"/></svg>
<svg class="b" style="left:680.3px;top:379px" width="11" height="6.5" viewBox="0 0 11 6.5"><path d="M2.4 6V1.2M0.9 2.7L2.4 1.2L3.9 2.7" fill="none" stroke="#d3d7db" stroke-width="0.85"/><path d="M8 0.3V5.3M6.2 3.6L8 5.4L9.8 3.6" fill="none" stroke="#1e1e1e" stroke-width="1.1"/></svg>
<div class="t" style="left:-16.44px;top:398.99px;font-size:8.28px;line-height:8.28px;font-weight:700;color:#333;transform:scaleX(0.9286);">Cross Site Scripting (XSS)</div>
<div class="t" style="left:116.17px;top:398.99px;font-size:8.28px;line-height:8.28px;font-weight:400;color:#444;transform:scaleX(0.9714);">HIGH</div>
<div class="t" style="left:169.45px;top:398.99px;font-size:8.28px;line-height:8.28px;font-weight:400;color:#444;transform:scaleX(0.9951);">attackgen@darkweb.com</div>
<div class="t" style="left:347.01px;top:398.99px;font-size:8.28px;line-height:8.28px;font-weight:400;color:#444;transform:scaleX(0.9864);">GET /myorders</div>
<div class="t" style="left:483.99px;top:398.99px;font-size:8.28px;line-height:8.28px;font-weight:400;color:#444;transform:scaleX(1.0259);">nginx-traceshop</div>
<div class="t" style="left:598.09px;top:398.99px;font-size:8.28px;line-height:8.28px;font-weight:400;color:#444;transform:scaleX(1.0178);">2024-03-06 08:34:49 AM</div>
<div class="t" style="left:703.34px;top:398.99px;font-size:8.28px;line-height:8.28px;font-weight:400;color:#444;transform:scaleX(1.0080);">Data Center</div>
<div class="b" style="left:0;top:414.0px;width:770px;height:1px;background:#f0f1f3"></div>
<div class="t" style="left:-16.44px;top:423.64px;font-size:8.28px;line-height:8.28px;font-weight:700;color:#333;transform:scaleX(0.9286);">Cross Site Scripting (XSS)</div>
<div class="t" style="left:116.17px;top:423.64px;font-size:8.28px;line-height:8.28px;font-weight:400;color:#444;transform:scaleX(0.9714);">HIGH</div>
<div class="t" style="left:169.20px;top:423.64px;font-size:8.28px;line-height:8.28px;font-weight:400;color:#444;transform:scaleX(1.0011);">rodrigues@darkweb.com</div>
<div class="t" style="left:347.01px;top:423.64px;font-size:8.28px;line-height:8.28px;font-weight:400;color:#444;transform:scaleX(0.9864);">GET /myorders</div>
<div class="t" style="left:483.99px;top:423.64px;font-size:8.28px;line-height:8.28px;font-weight:400;color:#444;transform:scaleX(1.0259);">nginx-traceshop</div>
<div class="t" style="left:598.09px;top:423.64px;font-size:8.28px;line-height:8.28px;font-weight:400;color:#444;transform:scaleX(1.0178);">2024-03-06 08:33:26 AM</div>
<div class="t" style="left:703.34px;top:423.64px;font-size:8.28px;line-height:8.28px;font-weight:400;color:#444;transform:scaleX(1.0080);">Data Center</div>
<div class="b" style="left:0;top:438.3px;width:770px;height:1px;background:#f0f1f3"></div>
<div class="t" style="left:-16.44px;top:447.59px;font-size:8.28px;line-height:8.28px;font-weight:700;color:#333;transform:scaleX(0.9286);">Cross Site Scripting (XSS)</div>
<div class="t" style="left:116.17px;top:447.59px;font-size:8.28px;line-height:8.28px;font-weight:400;color:#444;transform:scaleX(0.9714);">HIGH</div>
<div class="t" style="left:169.45px;top:447.59px;font-size:8.28px;line-height:8.28px;font-weight:400;color:#444;transform:scaleX(1.0000);">allie@darkweb.com</div>
<div class="t" style="left:347.01px;top:447.59px;font-size:8.28px;line-height:8.28px;font-weight:400;color:#444;transform:scaleX(0.9864);">GET /myorders</div>
<div class="t" style="left:483.99px;top:447.59px;font-size:8.28px;line-height:8.28px;font-weight:400;color:#444;transform:scaleX(1.0259);">nginx-traceshop</div>
<div class="t" style="left:598.09px;top:447.59px;font-size:8.28px;line-height:8.28px;font-weight:400;color:#444;transform:scaleX(1.0178);">2024-03-06 08:33:00 AM</div>
<div class="t" style="left:703.34px;top:447.59px;font-size:8.28px;line-height:8.28px;font-weight:400;color:#444;transform:scaleX(1.0080);">Data Center</div>
<div class="b" style="left:0;top:462.6px;width:770px;height:1px;background:#f0f1f3"></div>
<div class="t" style="left:-16.44px;top:471.89px;font-size:8.28px;line-height:8.28px;font-weight:700;color:#333;transform:scaleX(0.9286);">Cross Site Scripting (XSS)</div>
<div class="t" style="left:116.17px;top:471.89px;font-size:8.28px;line-height:8.28px;font-weight:400;color:#444;transform:scaleX(0.9714);">HIGH</div>
<div class="t" style="left:169.45px;top:471.89px;font-size:8.28px;line-height:8.28px;font-weight:400;color:#444;transform:scaleX(1.0000);">allie@darkweb.com</div>
<div class="t" style="left:347.01px;top:471.89px;font-size:8.28px;line-height:8.28px;font-weight:400;color:#444;transform:scaleX(0.9864);">GET /myorders</div>
<div class="t" style="left:483.99px;top:471.89px;font-size:8.28px;line-height:8.28px;font-weight:400;color:#444;transform:scaleX(1.0259);">nginx-traceshop</div>
<div class="t" style="left:598.09px;top:471.89px;font-size:8.28px;line-height:8.28px;font-weight:400;color:#444;transform:scaleX(1.0178);">2024-03-06 08:33:00 AM</div>
<div class="t" style="left:703.34px;top:471.89px;font-size:8.28px;line-height:8.28px;font-weight:400;color:#444;transform:scaleX(1.0080);">Data Center</div>
<div class="b" style="left:0;top:486.9px;width:770px;height:1px;background:#f0f1f3"></div>
<div class="t" style="left:-16.44px;top:496.19px;font-size:8.28px;line-height:8.28px;font-weight:700;color:#333;transform:scaleX(0.9286);">Cross Site Scripting (XSS)</div>
<div class="t" style="left:116.19px;top:496.19px;font-size:8.28px;line-height:8.28px;font-weight:400;color:#444;transform:scaleX(0.9426);">MEDIUM</div>
<div class="t" style="left:169.45px;top:496.19px;font-size:8.28px;line-height:8.28px;font-weight:400;color:#444;transform:scaleX(1.0000);">allie@darkweb.com</div>
<div class="t" style="left:347.01px;top:496.19px;font-size:8.28px;line-height:8.28px;font-weight:400;color:#444;transform:scaleX(0.9864);">GET /myorders</div>
<div class="t" style="left:483.99px;top:496.19px;font-size:8.28px;line-height:8.28px;font-weight:400;color:#444;transform:scaleX(1.0259);">nginx-traceshop</div>
<div class="t" style="left:598.09px;top:496.19px;font-size:8.28px;line-height:8.28px;font-weight:400;color:#444;transform:scaleX(1.0178);">2024-03-06 08:33:00 AM</div>
<div class="t" style="left:703.34px;top:496.19px;font-size:8.28px;line-height:8.28px;font-weight:400;color:#444;transform:scaleX(1.0080);">Data Center</div>
<div class="b" style="left:0;top:511.2px;width:770px;height:1px;background:#f0f1f3"></div>
<div class="b" style="left:90px;top:115.6px;width:249.3px;height:128px;background:#242424;border-radius:2.5px;box-shadow:0 3px 10px rgba(0,0,0,0.22)"></div>
<div class="t" style="left:96.01px;top:124.52px;font-size:9.30px;line-height:9.30px;font-weight:400;color:#d0d0d0;transform:scaleX(1.0517);">Event ID Count :</div>
<div class="b" style="left:106.1px;top:146.1px;width:3.4px;height:3.4px;border-radius:50%;background:#0d1b2a"></div>
<div class="t" style="left:113.78px;top:143.35px;font-size:9.16px;line-height:9.16px;font-weight:400;color:#dadada;transform:scaleX(1.0325);">Cross Site Scripting (XSS)</div>
<div class="t" style="left:260px;width:70px;text-align:right;top:142.81px;font-size:9.2px;line-height:9.2px;font-weight:700;color:#f2f2f2">616</div>
<div class="b" style="left:106.1px;top:160.8px;width:3.4px;height:3.4px;border-radius:50%;background:#1f5566"></div>
<div class="t" style="left:114.30px;top:158.05px;font-size:9.16px;line-height:9.16px;font-weight:400;color:#dadada;transform:scaleX(1.0620);">Authorization Bypass - User Level</div>
<div class="t" style="left:260px;width:70px;text-align:right;top:157.51px;font-size:9.2px;line-height:9.2px;font-weight:700;color:#f2f2f2">21</div>
<div class="b" style="left:106.1px;top:175.8px;width:3.4px;height:3.4px;border-radius:50%;background:#1a8a80"></div>
<div class="t" style="left:113.51px;top:173.05px;font-size:9.16px;line-height:9.16px;font-weight:400;color:#dadada;transform:scaleX(1.0578);">Broken Function Level Authorization (BFLA)</div>
<div class="t" style="left:260px;width:70px;text-align:right;top:172.51px;font-size:9.2px;line-height:9.2px;font-weight:700;color:#f2f2f2">0</div>
<div class="b" style="left:106.1px;top:190.8px;width:3.4px;height:3.4px;border-radius:50%;background:#5fae6e"></div>
<div class="t" style="left:113.77px;top:188.05px;font-size:9.16px;line-height:9.16px;font-weight:400;color:#dadada;transform:scaleX(1.0581);">Content Size Anomaly</div>
<div class="t" style="left:260px;width:70px;text-align:right;top:187.51px;font-size:9.2px;line-height:9.2px;font-weight:700;color:#f2f2f2">0</div>
<div class="b" style="left:106.1px;top:205.4px;width:3.4px;height:3.4px;border-radius:50%;background:#fce8a0"></div>
<div class="t" style="left:113.52px;top:202.65px;font-size:9.16px;line-height:9.16px;font-weight:400;color:#dadada;transform:scaleX(1.0435);">HTTP Protocol Attacks</div>
<div class="t" style="left:260px;width:70px;text-align:right;top:202.11px;font-size:9.2px;line-height:9.2px;font-weight:700;color:#f2f2f2">0</div>
<div class="t" style="left:96.52px;top:225.03px;font-size:9.88px;line-height:9.88px;font-weight:400;color:#9a9a9a;transform:scaleX(0.9530);">7 Feb 2024 4:00 PM</div>
<svg class="b" style="left:0;top:0" width="770" height="300" viewBox="0 0 770 300"><rect x="322.02" y="241.3" width="3" height="4" rx="0.6" fill="#0b1a2b"/></svg>
</body></html>
